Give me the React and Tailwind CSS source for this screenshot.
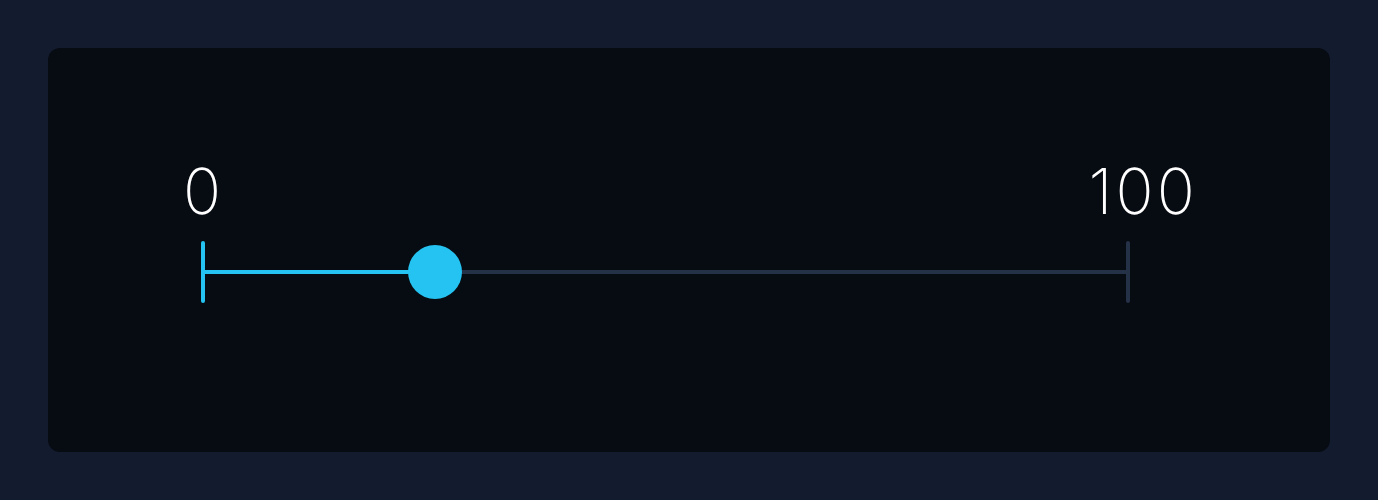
import React, { useState } from "react";

const MIN = 0;
const MAX = 100;

function RangeSlider({ value }) {
  const pct = ((value - MIN) / (MAX - MIN)) * 100;

  return (
    <div className="w-[929px]">
      <div className="flex justify-between items-end text-white font-extralight text-[63px] tracking-[0.05em] leading-none h-[64px]">
        <span className="-ml-[18px]">{MIN}</span>
        <span className="-mr-[68px]">{MAX}</span>
      </div>
      <div className="mt-[18px] flex items-center h-[62px]">
        <div className="w-[4px] h-[62px] rounded-full bg-[#24c3f1] shrink-0" />
        <div className="relative flex-1 flex items-center">
          <div className="h-[4px] bg-[#24c3f1]" style={{ width: `${pct}%` }} />
          <div className="h-[4px] flex-1 bg-[#243147]" />
          {/* thumb */}
          <div
            className="absolute top-1/2 w-[54px] h-[54px] -translate-x-1/2 -translate-y-1/2 rounded-full bg-[#24c3f1]"
            style={{ left: `${pct}%` }}
          />
        </div>
        <div className="w-[4px] h-[62px] rounded-full bg-[#243147] shrink-0" />
      </div>
    </div>
  );
}

export default function App() {
  const [value] = useState(25);

  return (
    <div
      className="min-h-[500px] bg-[#131b2e] p-12"
      style={{ fontFamily: "Inter, 'Noto Sans', sans-serif" }}
    >
      <div className="h-[404px] rounded-xl bg-[#070b12] pl-[153px] pt-[111px]">
        <RangeSlider value={value} />
      </div>
    </div>
  );
}
